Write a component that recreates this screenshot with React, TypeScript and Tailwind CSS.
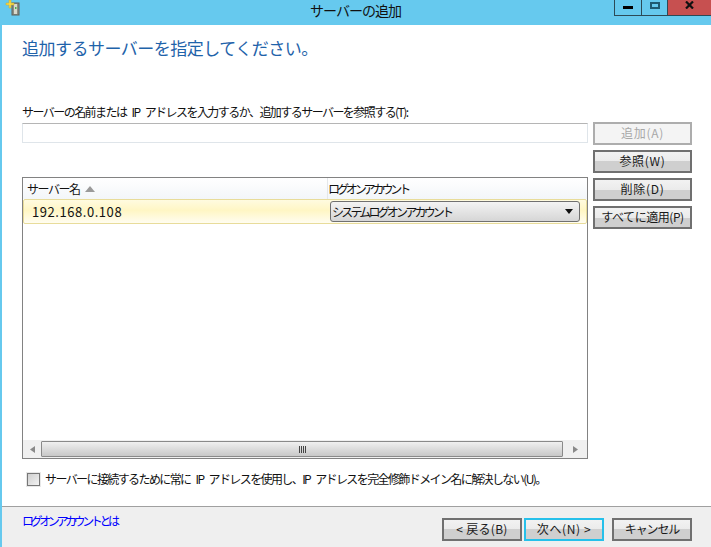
const font = { fontFamily: '"Noto Sans CJK JP", "Liberation Sans", sans-serif' };

function WinButton({
  label,
  disabled,
  focused,
  tracking,
  className,
}: {
  label: string;
  disabled?: boolean;
  focused?: boolean;
  tracking?: string;
  className?: string;
}) {
  const border = disabled ? "border-[#adadad]" : focused ? "border-[#26c0ea]" : "border-[#707070]";
  const bg = disabled
    ? "bg-[#f4f4f4] text-[#a8a8a8]"
    : "bg-[linear-gradient(to_bottom,#f2f2f2_0%,#ebebeb_50%,#cfcfcf_50%,#cfcfcf_100%)] text-[#1a1a1a]";
  return (
    <button
      className={`flex h-[23px] items-center justify-center border-2 pb-[1px] text-[12px] leading-none ${border} ${bg} ${tracking ?? "tracking-[0.7px]"} ${className ?? ""}`}
    >
      {label}
    </button>
  );
}

function ServerIcon() {
  return (
    <svg width="16" height="16" viewBox="0 0 16 16">
      <rect x="8" y="3" width="7" height="12" fill="#8b8f85" stroke="#5c5f58" strokeWidth="1" />
      <rect x="10" y="4" width="3" height="10" fill="#d8d8cc" />
      <rect x="11" y="7" width="1.5" height="2" fill="#4caf50" />
      <path d="M5 0h2v3h3v2H7v3H5V5H2V3h3z" fill="#f5d94a" stroke="#c9a92a" strokeWidth="0.5" />
    </svg>
  );
}

export default function App() {
  return (
    <div style={font} className="flex h-[547px] w-[711px] flex-col overflow-hidden bg-[#66c9ee] text-[#111]">
      {/* title bar */}
      <div className="relative flex h-[25px] shrink-0 items-start justify-center">
        <div className="absolute left-[4px] top-0">
          <ServerIcon />
        </div>
        <span className="pt-[3px] text-[14px] leading-[14px] tracking-[-1px] text-[#111]">サーバーの追加</span>
        <div className="absolute right-0 top-0 flex h-[16px]">
          <div className="flex w-[28px] items-start justify-center border-x border-b border-[#2c4a57]">
            <div className="mt-[6px] h-[3px] w-[10px] bg-black" />
          </div>
          <div className="flex w-[26px] items-start justify-center border-r border-b border-[#2c4a57]">
            <div className="mt-[2px] h-[7px] w-[10px] border-2 border-[#1f5a72]" />
          </div>
          <div className="flex w-[43px] items-start justify-center border-b border-[#2c4a57] bg-[#c75050] pt-[1px]">
            <svg width="9" height="8" viewBox="0 0 9 8">
              <path d="M1 0.5 8 7.5M8 0.5 1 7.5" stroke="#111" strokeWidth="2.2" />
            </svg>
          </div>
        </div>
      </div>

      {/* body */}
      <div className="ml-[2px] flex min-h-0 flex-1 flex-col bg-white">
        <div className="flex flex-1 flex-col pl-[20px]">
          <h1 className="mt-[10px] h-[25px] text-[17px] leading-[25px] tracking-[-0.5px] text-[#1f63aa]">
            追加するサーバーを指定してください。
          </h1>
          <div className="mt-[40px] h-[22px] pt-[1px] text-[12px] leading-[22px] tracking-[-1.55px] [word-spacing:4px]">
            サーバーの名前または IP アドレスを入力するか、追加するサーバーを参照する(T):
          </div>
          <div className="flex gap-[5px]">
            <div className="flex w-[566px] flex-col">
              <div className="mt-[1px] h-[20px] border border-[#dfe5ea] border-t-[#b5b5b5]" />
              <div className="mt-[34px] flex h-[282px] flex-col border border-[#828282]">
                <div className="flex h-[21px] shrink-0 bg-[linear-gradient(to_bottom,#ffffff,#f3f6f9)] text-[12px] leading-[21px]">
                  <div className="flex w-[304px] items-center gap-[6px] pl-[4px]">
                    <span className="tracking-[-1.5px]">サーバー名</span>
                    <svg width="10" height="6" viewBox="0 0 10 6">
                      <path d="M0 6 5 0l5 6z" fill="#9a9a9a" />
                    </svg>
                  </div>
                  <div className="border-l border-[#e4e7ea] tracking-[-3.1px]">ログオンアカウント</div>
                </div>
                <div className="flex h-[25px] shrink-0 items-center rounded-[2px] border border-[#e8dc9a] bg-[linear-gradient(to_bottom,#fffbe0,#fff6c4_45%,#fffdf0)] pl-[8px] text-[13px]">
                  <span className="w-[298px] tracking-[0.55px] text-[#111]">192.168.0.108</span>
                  <div className="flex h-[21px] w-[250px] items-center justify-between rounded-[3px] border border-[#707070] bg-[linear-gradient(to_bottom,#f3f3f3,#d6d6d6)] pl-[1px] pr-[6px] text-[12px] tracking-[-2.8px]">
                    <span>システムログオンアカウント</span>
                    <svg width="8" height="5" viewBox="0 0 8 5">
                      <path d="M0 0h8L4 5z" fill="#111" />
                    </svg>
                  </div>
                </div>
                <div className="flex-1" />
                <div className="flex h-[18px] shrink-0 items-center bg-[#f0f0f0]">
                  <div className="flex w-[18px] justify-center">
                    <svg width="5" height="7" viewBox="0 0 5 7">
                      <path d="M5 0v7L0 3.5z" fill="#8a8a8a" />
                    </svg>
                  </div>
                  <div className="flex h-[16px] flex-1 items-center justify-center rounded-[1px] border border-[#8a8a8a] bg-[linear-gradient(to_bottom,#f0f0f0,#dcdcdc_50%,#c8c8c8)]">
                    <svg width="7" height="7" viewBox="0 0 7 7">
                      <path d="M0.5 0v7M2.5 0v7M4.5 0v7M6.5 0v7" stroke="#444" strokeWidth="1" />
                    </svg>
                  </div>
                  <div className="flex w-[24px] justify-center">
                    <svg width="5" height="7" viewBox="0 0 5 7">
                      <path d="M0 0v7l5-3.5z" fill="#8a8a8a" />
                    </svg>
                  </div>
                </div>
              </div>
            </div>
            <div className="flex w-[99px] flex-col gap-[5px]">
              <WinButton label="追加(A)" disabled />
              <WinButton label="参照(W)" />
              <WinButton label="削除(D)" />
              <WinButton label="すべてに適用(P)" tracking="tracking-[-0.45px]" />
            </div>
          </div>
          <div className="mt-[13px] flex items-center gap-[5px] pl-[5px] text-[12px] leading-[14px]">
            <div className="h-[13px] w-[13px] border border-[#777] bg-[linear-gradient(135deg,#cfcfcf,#f2f2f2)] outline-1 outline-[#e8e8e8]" />
            <span className="tracking-[-1.6px] [word-spacing:4px]">
              サーバーに接続するために常に IP アドレスを使用し、IP アドレスを完全修飾ドメイン名に解決しない(U)。
            </span>
          </div>
        </div>

        {/* footer */}
        <div className="flex h-[41px] shrink-0 justify-between border-t border-[#a0a0a0] bg-[#efefef] pl-[20px] pr-[19px]">
          <span className="pt-[5px] text-[12px] leading-[18px] tracking-[-3.4px] text-[#0000ff]">ログオンアカウントとは</span>
          <div className="flex items-start pt-[11px]">
            <WinButton label="< 戻る(B)" tracking="tracking-[0.3px]" className="w-[80px]" />
            <WinButton label="次へ(N) >" focused tracking="tracking-[0.6px]" className="ml-[2px] w-[80px]" />
            <WinButton label="キャンセル" tracking="tracking-[-1.1px]" className="ml-[8px] w-[80px]" />
          </div>
        </div>
      </div>
    </div>
  );
}
